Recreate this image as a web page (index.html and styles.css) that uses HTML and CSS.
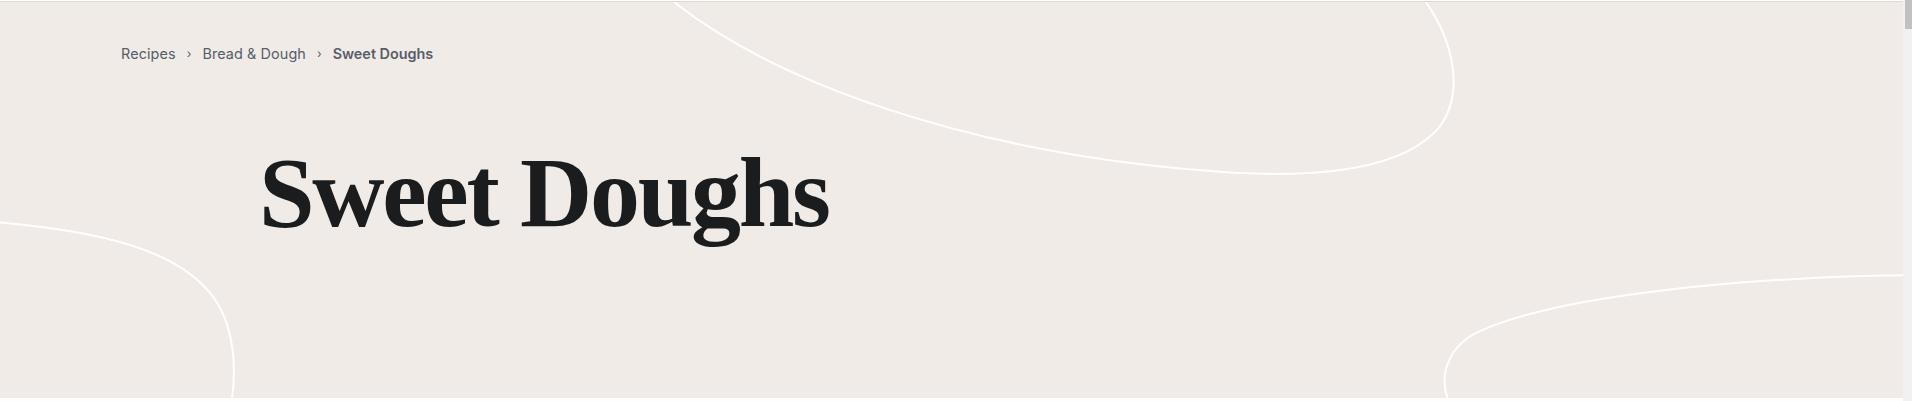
FILE: index.html
```html
<!DOCTYPE html>
<html lang="en">
<head>
<meta charset="utf-8">
<title>Sweet Doughs</title>
<link rel="stylesheet" href="styles.css">
</head>
<body>
<div class="page">
  <main class="main">
    <section class="hero">
      <svg class="deco" viewBox="0 2 1903 397" preserveAspectRatio="none" aria-hidden="true">
        <path d="M674,2 C775,82 965,152 1205,171 C1332,182 1407,165 1439,128 C1466,92 1452,40 1426,2"/>
        <path d="M0,223 C100,232 180,250 215,300 C235,330 236,370 232,400"/>
        <path d="M1903,276 C1750,278 1560,295 1480,332 C1450,345 1438,375 1448,400"/>
      </svg>
      <nav class="crumbs">
        <a class="crumb" href="#">Recipes</a>
        <span class="sep">›</span>
        <a class="crumb" href="#">Bread &amp; Dough</a>
        <span class="sep">›</span>
        <span class="crumb current">Sweet Doughs</span>
      </nav>
      <h1 class="title">Sweet Doughs</h1>
    </section>
  </main>
  <div class="scrollbar"><div class="thumb"></div></div>
</div>
</body>
</html>
```

FILE: styles.css
```css
html, body {
  margin: 0;
  padding: 0;
  background: #ffffff;
  overflow: hidden;
}
.page {
  display: flex;
  height: 401px;
}
.main {
  flex: 1;
  padding-top: 1px;
}
.hero {
  position: relative;
  height: 397px;
  border-top: 1px solid #dcd8d4;
  background: #f0ebe7;
  overflow: hidden;
  padding: 0 0 0 121px;
  box-sizing: border-box;
}
.deco {
  position: absolute;
  left: 0;
  top: 0;
  width: 100%;
  height: 100%;
  fill: none;
  stroke: #ffffff;
  stroke-width: 2;
}
.crumbs {
  position: relative;
  display: flex;
  align-items: center;
  padding-top: 43px;
  font-family: "Inter", "Noto Sans", sans-serif;
  font-size: 14.4px;
  letter-spacing: 0.1px;
  line-height: 18px;
  color: #585d6a;
}
.crumb {
  color: #585d6a;
  text-decoration: none;
}
.sep {
  font-size: 12px;
  margin: 0 11px;
}
.current {
  font-weight: 600;
  letter-spacing: 0;
}
.title {
  position: relative;
  margin: 80px 0 0 138px;
  font-family: "Liberation Serif", "Times New Roman", serif;
  font-weight: 700;
  font-size: 100px;
  line-height: 100px;
  letter-spacing: -2.3px;
  color: #1b1c1e;
}
.scrollbar {
  width: 9px;
  background: #f1f1f1;
  display: flex;
  justify-content: flex-end;
}
.thumb {
  width: 7px;
  height: 29px;
  background: #c1c1c1;
}
```
